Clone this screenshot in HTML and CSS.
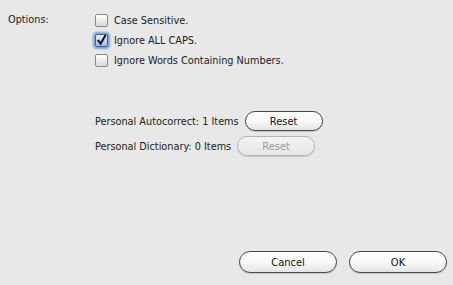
FILE: index.html
```html
<!DOCTYPE html>
<html lang="en">
<head>
    <meta charset="UTF-8">
    <title>Spelling Options</title>
    <link rel="stylesheet" href="styles.css">
</head>
<body>
    <div class="panel">
        <div class="options">
            <div class="options-label">Options:</div>
            <div class="checks">
                <label class="check-row">
                    <span class="box"></span>
                    <span>Case Sensitive.</span>
                </label>
                <label class="check-row">
                    <span class="box checked">
                        <svg width="12" height="12" viewBox="0 0 12 12">
                            <path d="M2 6 L5 10 L10.5 0.5" fill="none" stroke="#111" stroke-width="2.2"/>
                        </svg>
                    </span>
                    <span>Ignore ALL CAPS.</span>
                </label>
                <label class="check-row">
                    <span class="box"></span>
                    <span>Ignore Words Containing Numbers.</span>
                </label>
            </div>
        </div>
        <div class="personal">
            <div class="personal-row">
                <span>Personal Autocorrect: 1 Items</span>
                <button class="pill small">Reset</button>
            </div>
            <div class="personal-row">
                <span>Personal Dictionary: 0 Items</span>
                <button class="pill small" disabled>Reset</button>
            </div>
        </div>
        <div class="footer">
            <button class="pill wide">Cancel</button>
            <button class="pill wide">OK</button>
        </div>
    </div>
</body>
</html>
```
FILE: styles.css
```css
body {
    margin: 0;
    background-color: #e8e8e8;
    font-family: "DejaVu Sans Condensed", "Liberation Sans", sans-serif;
    font-size: 10.8px;
    color: #222;
}
.panel {
    display: flex;
    flex-direction: column;
    height: 285px;
    box-sizing: border-box;
    padding: 10px 6px 12px 8px;
}
.options {
    display: flex;
}
.options-label {
    width: 87px;
    line-height: 20px;
}
.checks {
    display: flex;
    flex-direction: column;
}
.check-row {
    display: flex;
    align-items: center;
    height: 20px;
    gap: 6px;
}
.box {
    width: 11px;
    height: 11px;
    border: 1px solid #8a8a8a;
    border-radius: 2px;
    background: linear-gradient(#ffffff, #d8d8d8);
    display: flex;
    align-items: center;
    justify-content: center;
}
.box.checked {
    border-color: #3a5f9a;
    background: linear-gradient(#e6efff, #9fbbe8);
    box-shadow: 0 0 2px 2px rgba(90, 140, 220, 0.75);
}
.personal {
    display: flex;
    flex-direction: column;
    gap: 5px;
    margin-top: 41px;
    padding-left: 87px;
}
.personal-row {
    display: flex;
    align-items: center;
    gap: 6px;
    height: 20px;
}
.pill {
    font-family: inherit;
    font-size: 11px;
    color: #111;
    border: 1px solid #4a4a4a;
    border-radius: 11px;
    background: linear-gradient(#ffffff 0%, #fafafa 50%, #e4e4e4 100%);
    box-shadow: 0 1px 1px rgba(0, 0, 0, 0.15);
    padding: 0;
}
.pill:disabled {
    color: #9a9a9a;
    border-color: #b4b4b4;
    background: linear-gradient(#f4f4f4, #e6e6e6);
}
.small {
    width: 78px;
    height: 20px;
}
.wide {
    width: 98px;
    height: 22px;
}
.footer {
    margin-top: auto;
    display: flex;
    justify-content: flex-end;
    gap: 12px;
}
```
